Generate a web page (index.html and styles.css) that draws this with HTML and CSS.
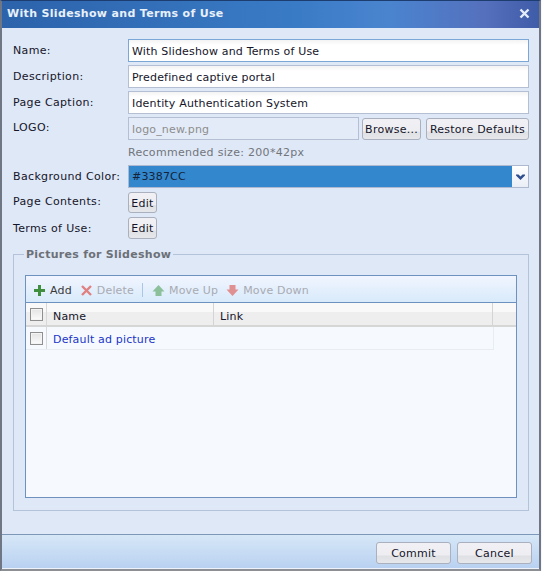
FILE: index.html
```html
<!DOCTYPE html>
<html lang="en">
	<head>
		<meta charset="UTF-8" />
		<title>With Slideshow and Terms of Use</title>
		<link rel="stylesheet" href="styles.css">
	</head>
	<body>
		<div class="dialog">
			<div class="dialog-title">
				<span>With Slideshow and Terms of Use</span>
				<svg class="close-icon" width="11" height="11" viewBox="0 0 11 11"><path d="M1.5 1.5l8 8M9.5 1.5l-8 8" stroke="#e6edf8" stroke-width="2.4" fill="none"/></svg>
			</div>
			<div class="dialog-body">
				<div class="form-row">
					<label class="form-label">Name:</label>
					<input class="text-input focused" type="text" value="With Slideshow and Terms of Use" />
				</div>
				<div class="form-row">
					<label class="form-label">Description:</label>
					<input class="text-input" type="text" value="Predefined captive portal" />
				</div>
				<div class="form-row">
					<label class="form-label">Page Caption:</label>
					<input class="text-input" type="text" value="Identity Authentication System" />
				</div>
				<div class="form-row logo-row">
					<label class="form-label">LOGO:</label>
					<input class="text-input disabled" type="text" value="logo_new.png" disabled />
					<button class="btn browse-btn" type="button">Browse...</button>
					<button class="btn restore-btn" type="button">Restore Defaults</button>
				</div>
				<p class="form-hint">Recommended size: 200*42px</p>
				<div class="form-row color-row">
					<label class="form-label">Background Color:</label>
					<div class="color-select">
						<span class="color-value">#3387CC</span>
						<span class="color-arrow">
							<svg width="9" height="6" viewBox="0 0 9 6"><path d="M0 0.500h2.500l2 2 2-2H9v1l-4.500 4.500L0 1.500z" fill="#2f4f8f"/></svg>
						</span>
					</div>
				</div>
				<div class="form-row edit-row contents-row">
					<label class="form-label">Page Contents:</label>
					<button class="btn edit-btn" type="button">Edit</button>
				</div>
				<div class="form-row edit-row terms-row">
					<label class="form-label">Terms of Use:</label>
					<button class="btn edit-btn" type="button">Edit</button>
				</div>

				<fieldset class="slides-box">
					<legend>Pictures for Slideshow</legend>
					<div class="grid-panel">
						<div class="grid-toolbar">
							<span class="tool-item">
								<svg width="13" height="13" viewBox="0 0 13 13"><path d="M5 1h3v4h4v3H8v4H5V8H1V5h4z" fill="#3f8f3f"/></svg>
								Add
							</span>
							<span class="tool-item off">
								<svg width="13" height="13" viewBox="0 0 13 13"><path d="M2 2l9 9M11 2l-9 9" stroke="#e08080" stroke-width="2.400" fill="none"/></svg>
								Delete
							</span>
							<span class="tool-sep"></span>
							<span class="tool-item off">
								<svg width="13" height="13" viewBox="0 0 13 13"><path d="M6.500 1l6 6.500H9.500V12h-6V7.500H.5z" fill="#8cc09a"/></svg>
								Move Up
							</span>
							<span class="tool-item off">
								<svg width="13" height="13" viewBox="0 0 13 13"><path d="M6.500 12l-6-6.500h3V1h6v4.500h3z" fill="#e09090"/></svg>
								Move Down
							</span>
						</div>
						<div class="grid-header">
							<div class="check-cell"><span class="checkbox"></span></div>
							<div class="head-cell name-col">Name</div>
							<div class="head-cell link-col">Link</div>
							<div class="head-cell rest-col"></div>
						</div>
						<div class="grid-row">
							<div class="check-cell"><span class="checkbox"></span></div>
							<div class="row-name">Default ad picture</div>
						</div>
					</div>
				</fieldset>
			</div>
			<div class="dialog-footer">
				<button class="btn footer-btn" type="button">Commit</button>
				<button class="btn footer-btn" type="button">Cancel</button>
			</div>
		</div>
	</body>
</html>
```

FILE: styles.css
```css
html, body {
	margin: 0;
	padding: 0;
	background-color: #f4f6fa;
}
body {
	font-family: "DejaVu Sans", Verdana, sans-serif;
	font-size: 11px;
	letter-spacing: 0.17px;
	color: #15152a;
}

.dialog {
	width: 541px;
	height: 571px;
	box-sizing: border-box;
	border-left: 2px solid #6f7784;
	border-right: 2px solid #6f7784;
	border-bottom: 2px solid #8c8f94;
	border-top: 1px solid #1d3c70;
	background-color: #dfe8f6;
	display: flex;
	flex-direction: column;
}

.dialog-title {
	height: 27px;
	flex: none;
	box-sizing: border-box;
	padding: 0 9px 2px 5px;
	display: flex;
	align-items: center;
	justify-content: space-between;
	background: linear-gradient(90deg, #2c63ab 0%, #3a7bc6 55%, #4a84cf 72%, #5570bd 90%, #3f5ca8 100%);
	color: #e8f0fa;
	font-weight: bold;
	letter-spacing: 0.33px;
}

.dialog-body {
	flex: 1;
	padding: 11px 10px 0 11px;
	border-bottom: 1px solid #7d97b8;
}

.form-row {
	display: flex;
	align-items: center;
	height: 23px;
	margin-bottom: 3px;
}
.form-label {
	width: 115px;
	flex: none;
	letter-spacing: 0.35px;
}
.logo-row .form-label {
	padding-bottom: 2px;
}
.text-input {
	flex: 1;
	min-width: 0;
	height: 23px;
	box-sizing: border-box;
	padding: 1px 3px 0;
	border: 1px solid #b5bfd4;
	background: linear-gradient(#f3f3f3, #ffffff 5px);
	font-family: inherit;
	font-size: 11px;
	letter-spacing: inherit;
	color: #15152a;
}
.text-input.focused {
	border-color: #7ba7d6;
}
.text-input.disabled {
	background: #e3ebf8;
	color: #8d8d8d;
}

.btn {
	height: 22px;
	box-sizing: border-box;
	padding: 1px 0 0;
	border: 1px solid #aab0bd;
	border-radius: 3px;
	background: linear-gradient(#f1f1f5 0%, #eeeef2 62%, #dfe0e4 63%, #e6e7ea 100%);
	font-family: inherit;
	font-size: 11px;
	letter-spacing: 0.25px;
	color: #15152a;
}
.logo-row .btn {
	flex: none;
	margin-left: 3px;
}
.browse-btn {
	width: 59px;
}
.logo-row .restore-btn {
	width: 103px;
	margin-left: 5px;
}
.form-hint {
	margin: 0 0 0 115px;
	height: 22px;
	line-height: 20px;
	letter-spacing: 0.3px;
	color: #71757c;
}

.color-row {
	margin-bottom: 4px;
}
.color-select {
	flex: 1;
	height: 23px;
	box-sizing: border-box;
	border: 1px solid #aeb8cf;
	display: flex;
}
.color-value {
	flex: 1;
	background-color: #3387cc;
	padding: 0 3px;
	line-height: 22px;
	color: #14233a;
}
.color-arrow {
	width: 16px;
	background: linear-gradient(#ffffff, #e9eef6);
	display: flex;
	align-items: center;
	justify-content: center;
}

.edit-row {
	height: 22px;
}
.edit-btn {
	width: 29px;
	height: 21px;
	align-self: flex-start;
}
.contents-row .form-label {
	padding-bottom: 3px;
}
.terms-row .edit-btn {
	height: 22px;
}

.slides-box {
	margin: 9px 0 0;
	padding: 14px 11px 13px 11px;
	height: 263px;
	box-sizing: border-box;
	border: 1px solid #b4c3d9;
	min-width: 0;
}
.slides-box legend {
	padding: 0 2px;
	margin-left: -1px;
	font-weight: bold;
	letter-spacing: 0.27px;
	color: #6c7078;
}

.grid-panel {
	height: 223px;
	box-sizing: border-box;
	border: 1px solid #6d92bf;
	background-color: #f6fafe;
}
.grid-toolbar {
	height: 27px;
	box-sizing: border-box;
	border-bottom: 1px solid #6d92bf;
	background: linear-gradient(#f1f5fe, #d8eafb);
	padding: 2px 7px 0;
	display: flex;
	align-items: center;
	gap: 8px;
	color: #3a3a3a;
}
.tool-item {
	display: flex;
	align-items: center;
	gap: 4px;
}
.tool-item.off {
	color: #a8abb2;
}
.tool-sep {
	width: 1px;
	height: 14px;
	margin-right: 1px;
	background-color: #a9c6e6;
}

.grid-header {
	height: 24px;
	box-sizing: border-box;
	display: flex;
	border-bottom: 2px solid #d6d6d6;
	background: linear-gradient(#f9f9f9 0%, #f9f9f9 40%, #eeeeee 41%, #eeeeee 100%);
}
.check-cell {
	width: 21px;
	flex: none;
	box-sizing: border-box;
	border-right: 1px solid #d8d8d8;
	display: flex;
	align-items: center;
	justify-content: center;
}
.checkbox {
	width: 11px;
	height: 11px;
	border: 1px solid #8f8f8f;
	background: linear-gradient(#e4e4e4, #fbfbfb);
	box-shadow: inset 0 0 0 1px #f4f4f4;
}
.head-cell {
	box-sizing: border-box;
	padding: 2px 6px 0;
	line-height: 24px;
	border-right: 1px solid #d4d4d4;
}
.name-col {
	width: 167px;
}
.link-col {
	width: 279px;
}
.rest-col {
	flex: 1;
	border-right: 0;
}

.grid-row {
	width: 468px;
	height: 23px;
	box-sizing: border-box;
	display: flex;
	border-right: 1px solid #e8edf3;
	border-bottom: 1px solid #e8edf3;
}
.row-name {
	padding: 1px 6px 0;
	line-height: 24px;
	color: #1a35c8;
}

.dialog-footer {
	height: 34px;
	flex: none;
	box-sizing: border-box;
	padding: 7px 7px 0 0;
	display: flex;
	justify-content: flex-end;
	gap: 6px;
	background: linear-gradient(#d6e7f7, #b9d1f1);
	border-bottom: 1px solid #eef3fb;
}
.footer-btn {
	width: 75px;
}
```
